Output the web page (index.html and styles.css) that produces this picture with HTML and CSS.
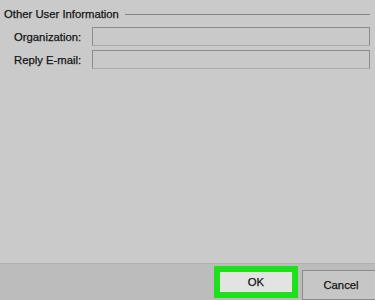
FILE: index.html
```html
<!DOCTYPE html>
<html lang="en">
<head>
  <meta charset="UTF-8">
  <title>Other User Information</title>
  <link rel="stylesheet" href="styles.css">
</head>
<body>
<div class="dialog">
  <div class="content">
    <div class="group">
      <div class="legend"><span>Other User Information</span><div class="rule"></div></div>
      <div class="field">
        <label>Organization:</label>
        <div class="input"></div>
      </div>
      <div class="field">
        <label>Reply E-mail:</label>
        <div class="input"></div>
      </div>
    </div>
  </div>
  <div class="footer">
    <button class="btn btn-ok">OK</button>
    <button class="btn btn-cancel">Cancel</button>
  </div>
</div>
</body>
</html>
```

FILE: styles.css
```css
html, body {
  margin: 0;
  padding: 0;
  background: #cacaca;
}
.dialog {
  width: 375px;
  height: 300px;
  overflow: hidden;
  display: flex;
  flex-direction: column;
  font-family: "Liberation Sans", Arial, sans-serif;
  font-size: 11.3px;
  -webkit-text-stroke: 0.25px #1a1a1a;
  color: #111;
}
.content {
  flex: 1;
  padding: 7px 5px 0 4px;
}
.legend {
  display: flex;
  align-items: center;
  gap: 6px;
  height: 14px;
}
.rule {
  flex: 1;
  height: 1px;
  background: #858585;
}
.field {
  display: flex;
  align-items: center;
  margin-top: 4px;
  padding-left: 10px;
}
.group .legend + .field { margin-top: 6px; }
.field label {
  width: 78px;
}
.input {
  flex: 1;
  height: 17px;
  border: 1px solid #8c8c8c;
  border-bottom-color: #aaa;
  background: #c9c9c9;
}
.footer {
  height: 37px;
  background: #bcbcbc;
  border-top: 1px solid #b0b0b0;
  display: flex;
  justify-content: flex-end;
  align-items: flex-start;
  gap: 4px;
  padding-top: 2px;
  box-sizing: border-box;
}
.btn {
  font: inherit;
  height: 30px;
  margin-top: 4px;
  background: #c6c6c6;
  border: 1px solid #8a8a8a;
  color: #111;
  padding: 0;
}
.btn-ok {
  width: 84px;
  height: 32px;
  margin-top: 0;
  background: #e3e3e3;
  border: 6px solid #1fe01a;
}
.btn-cancel {
  width: 78px;
  margin-right: -5px;
}
```
